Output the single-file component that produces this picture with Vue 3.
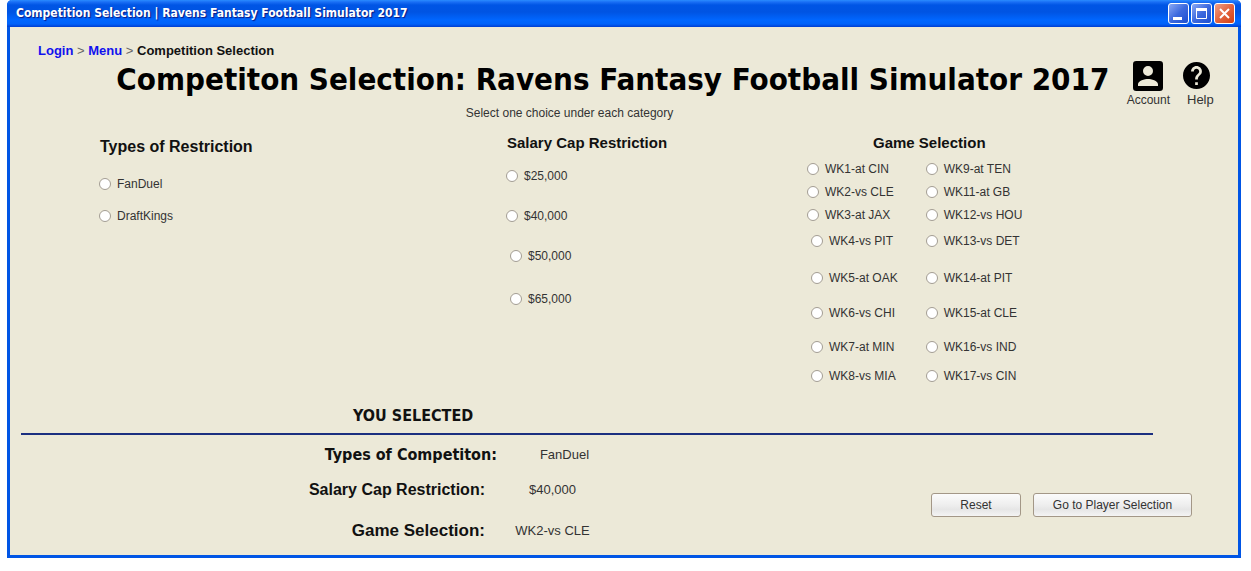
<script setup>
import { ref } from 'vue'

const restriction = ref('')
const salary = ref('')
const game = ref('')

const restrictions = ['FanDuel', 'DraftKings']
const lowCaps = ['$25,000', '$40,000']
const highCaps = ['$50,000', '$65,000']
const firstHalf = ['WK1-at CIN', 'WK2-vs CLE', 'WK3-at JAX', 'WK4-vs PIT', 'WK5-at OAK', 'WK6-vs CHI', 'WK7-at MIN', 'WK8-vs MIA']
const secondHalf = ['WK9-at TEN', 'WK11-at GB', 'WK12-vs HOU', 'WK13-vs DET', 'WK14-at PIT', 'WK15-at CLE', 'WK16-vs IND', 'WK17-vs CIN']

function reset() {
  restriction.value = ''
  salary.value = ''
  game.value = ''
}
</script>

<template>
  <div class="window">
    <header class="titlebar">
      <span class="caption">Competition Selection | Ravens Fantasy Football Simulator 2017</span>
      <button class="ctl" type="button" aria-label="Minimize">
        <svg viewBox="0 0 19 19"><path d="M4 14.500h9" stroke="#fff" stroke-width="3" /></svg>
      </button>
      <button class="ctl" type="button" aria-label="Maximize">
        <svg viewBox="0 0 19 19"><path d="M4.500 4.500h10v10h-10z" fill="none" stroke="#fff" /><path d="M4 5.500h11" stroke="#fff" stroke-width="3" /></svg>
      </button>
      <button class="ctl close" type="button" aria-label="Close">
        <svg viewBox="0 0 19 19"><path d="M5 5l9 9M14 5l-9 9" stroke="#fff" stroke-width="2" /></svg>
      </button>
    </header>

    <main class="body">
      <nav class="crumbs">
        <a href="#">Login</a> &gt; <a href="#">Menu</a> &gt; <b>Competition Selection</b>
      </nav>

      <div class="head">
        <h1>Competiton Selection: Ravens Fantasy Football Simulator 2017</h1>
        <div class="tools">
          <a class="tool" href="#">
            <svg viewBox="0 0 36 36">
              <path fill-rule="evenodd" d="M6.300 3h23.400a3.300 3.300 0 0 1 3.300 3.300v23.400a3.300 3.300 0 0 1-3.300 3.300H6.300A3.300 3.300 0 0 1 3 29.700V6.300A3.300 3.300 0 0 1 6.300 3zM18 8a5 5 0 1 0 0 10a5 5 0 0 0 0-10zM8 28h20v-1.700c0-3.300-6.700-5.200-10-5.200s-10 1.900-10 5.200z" />
            </svg>
            <span>Account</span>
          </a>
          <a class="tool help" href="#">
            <svg viewBox="2 2 20 20">
              <path d="M12 2C6.480 2 2 6.480 2 12s4.480 10 10 10 10-4.480 10-10S17.520 2 12 2zm1 17h-2v-2h2v2zm2.070-7.750l-.9.920C13.450 12.900 13 13.500 13 15h-2v-.5c0-1.100.450-2.100 1.170-2.830l1.240-1.260c.370-.360.590-.860.590-1.410 0-1.100-.9-2-2-2s-2 .9-2 2H8c0-2.210 1.790-4 4-4s4 1.790 4 4c0 .880-.360 1.680-.930 2.250z" />
            </svg>
            <span>Help</span>
          </a>
        </div>
      </div>
      <p class="hint">Select one choice under each category</p>

      <div class="choices">
        <fieldset class="types">
          <legend>Types of Restriction</legend>
          <div class="options">
            <label v-for="o in restrictions" :key="o"><input v-model="restriction" type="radio" name="restriction" :value="o" />{{ o }}</label>
          </div>
        </fieldset>

        <fieldset class="caps">
          <legend>Salary Cap Restriction</legend>
          <div class="options">
            <label v-for="o in lowCaps" :key="o"><input v-model="salary" type="radio" name="salary" :value="o" />{{ o }}</label>
          </div>
          <div class="options upper">
            <label v-for="o in highCaps" :key="o"><input v-model="salary" type="radio" name="salary" :value="o" />{{ o }}</label>
          </div>
        </fieldset>

        <fieldset class="games">
          <legend>Game Selection</legend>
          <div class="schedule">
            <div class="weeks first">
              <label v-for="o in firstHalf" :key="o"><input v-model="game" type="radio" name="game" :value="o" />{{ o }}</label>
            </div>
            <div class="weeks">
              <label v-for="o in secondHalf" :key="o"><input v-model="game" type="radio" name="game" :value="o" />{{ o }}</label>
            </div>
          </div>
        </fieldset>
      </div>

      <section class="summary">
        <h2>YOU SELECTED</h2>
        <hr />
        <div class="result">
          <dl>
            <dt class="wide">Types of Competiton:</dt>
            <dd class="wide">{{ restriction || 'FanDuel' }}</dd>
            <dt>Salary Cap Restriction:</dt>
            <dd>{{ salary || '$40,000' }}</dd>
            <dt class="last">Game Selection:</dt>
            <dd>{{ game || 'WK2-vs CLE' }}</dd>
          </dl>
          <div class="actions">
            <button class="reset" type="button" @click="reset">Reset</button>
            <button class="go" type="button">Go to Player Selection</button>
          </div>
        </div>
      </section>
    </main>
  </div>
</template>

<style>
body { margin: 0; background: #fff; }
</style>

<style scoped>
.window {
  margin: 0 10px 0 7px;
  border: 3px solid #0055e5;
  border-top: 0;
  border-radius: 5px 5px 0 0;
  background: #ece9d8;
  color: #333;
  font: 12px/16px "Liberation Sans", Arial, sans-serif;
}
.titlebar {
  display: flex;
  align-items: center;
  gap: 2px;
  height: 27px;
  margin: 0 -3px;
  padding: 0 6px 0 9px;
  box-sizing: border-box;
  border-radius: 5px 5px 0 0;
  background: linear-gradient(#2a8cff 0, #1a6ff5 2px, #0055e5 5px, #0054e3 12px, #0066ff 20px, #0062fa 24px, #003dd0 27px);
}
.caption {
  flex: 1;
  padding-bottom: 2px;
  color: #fff;
  font: bold 12px/16px "DejaVu Sans Condensed", Tahoma, sans-serif;
  text-shadow: 1px 1px 1px #0a1883;
}
.ctl {
  width: 21px;
  height: 21px;
  padding: 0;
  border: 1px solid #fff;
  border-radius: 3px;
  background: linear-gradient(135deg, #8ba9f5, #3c69de 50%, #1c4fd0);
}
.ctl svg { display: block; width: 19px; height: 19px; }
.close { background: linear-gradient(135deg, #f0a088, #e3643f 50%, #d23f12); }

.body { padding: 16px 18px 8px 11px; }
.crumbs {
  padding-left: 17px;
  color: #666;
  font-size: 13px;
}
.crumbs a { color: #1111ee; font-weight: bold; text-decoration: none; }
.crumbs b { color: #111; }
.head { display: flex; align-items: flex-start; height: 46px; }
h1 {
  flex: 1;
  margin: 0;
  padding-left: 78px;
  color: #000;
  font: bold 31px/40px "DejaVu Sans Condensed", Tahoma, sans-serif;
  text-align: center;
  white-space: nowrap;
}
.tools { display: flex; gap: 10px; padding-right: 4px; }
.tool {
  display: flex;
  flex-direction: column;
  align-items: center;
  min-width: 36px;
  color: #333;
  text-decoration: none;
}
.tool svg { width: 36px; height: 36px; margin: -1px 0 -2px; }
.help { align-items: flex-start; font-size: 13px; }
.help svg { width: 27px; height: 27px; margin: 3px 0 3px 3px; }
.help span { padding-left: 7px; }
.hint { margin: 0; padding-right: 102px; text-align: center; }

.choices {
  display: grid;
  grid-template-columns: 485fr 301fr 413fr;
  height: 285px;
}
fieldset { min-width: 0; margin: 0; padding: 0; border: 0; }
legend {
  padding: 13px 0 0;
  color: #111;
  font-size: 15px;
  font-weight: bold;
  line-height: 18px;
}
label { display: flex; align-items: center; }
input {
  appearance: none;
  width: 12px;
  height: 12px;
  margin: 0 6px 0 0;
  border: 1px solid #a39d93;
  border-radius: 50%;
  background: #fff;
}
input:checked { background: radial-gradient(#333 0 3px, #fff 4px); }
.types { padding-left: 78px; }
.types legend { padding: 17px 0 0 1px; font-size: 16px; }
.types .options { display: grid; gap: 16px; padding-top: 20px; }
.caps legend { padding-left: 1px; }
.caps .options { display: grid; gap: 24px; padding-top: 16px; }
.caps .upper { gap: 27px; padding: 24px 0 0 4px; }
.games legend { padding-left: 66px; }
.schedule { display: flex; gap: 28px; padding-top: 9px; }
.weeks {
  display: grid;
  grid-template-rows: 23px 23px 26px 37px 35px 34px 29px 20px;
  align-items: start;
}
.first label:nth-child(n + 4) { padding-left: 4px; }

h2 {
  margin: 0;
  padding-left: 332px;
  color: #111;
  font: bold 16px/20px "DejaVu Sans Condensed", Tahoma, sans-serif;
}
hr { margin: 7px 67px 0 0; border: 0; border-top: 2px solid #1b2f80; }
.result { display: flex; justify-content: space-between; align-items: flex-end; }
dl {
  display: grid;
  grid-template-columns: 476px 96px;
  grid-template-rows: 20px 20px 32px;
  row-gap: 15px;
  align-items: center;
  margin: 10px 0 0;
}
dt {
  padding-right: 12px;
  color: #111;
  font-size: 16px;
  font-weight: bold;
  line-height: 20px;
  text-align: right;
}
dt.wide { padding: 0; font-family: "DejaVu Sans Condensed", Tahoma, sans-serif; }
.last { font-size: 17px; }
dd { margin: 0; padding-left: 15px; font-size: 13px; text-align: center; }
dd.wide { padding-left: 39px; }
.actions { display: flex; gap: 12px; padding: 0 28px 30px 0; }
.actions button {
  height: 24px;
  border: 1px solid #a39787;
  border-radius: 3px;
  background: linear-gradient(#fbfbfb, #eee 50%, #e6e6e6 70%, #f4f4f4);
  color: #333;
  font: 12px "Liberation Sans", Arial, sans-serif;
}
.reset { width: 90px; }
.go { width: 159px; }
</style>
